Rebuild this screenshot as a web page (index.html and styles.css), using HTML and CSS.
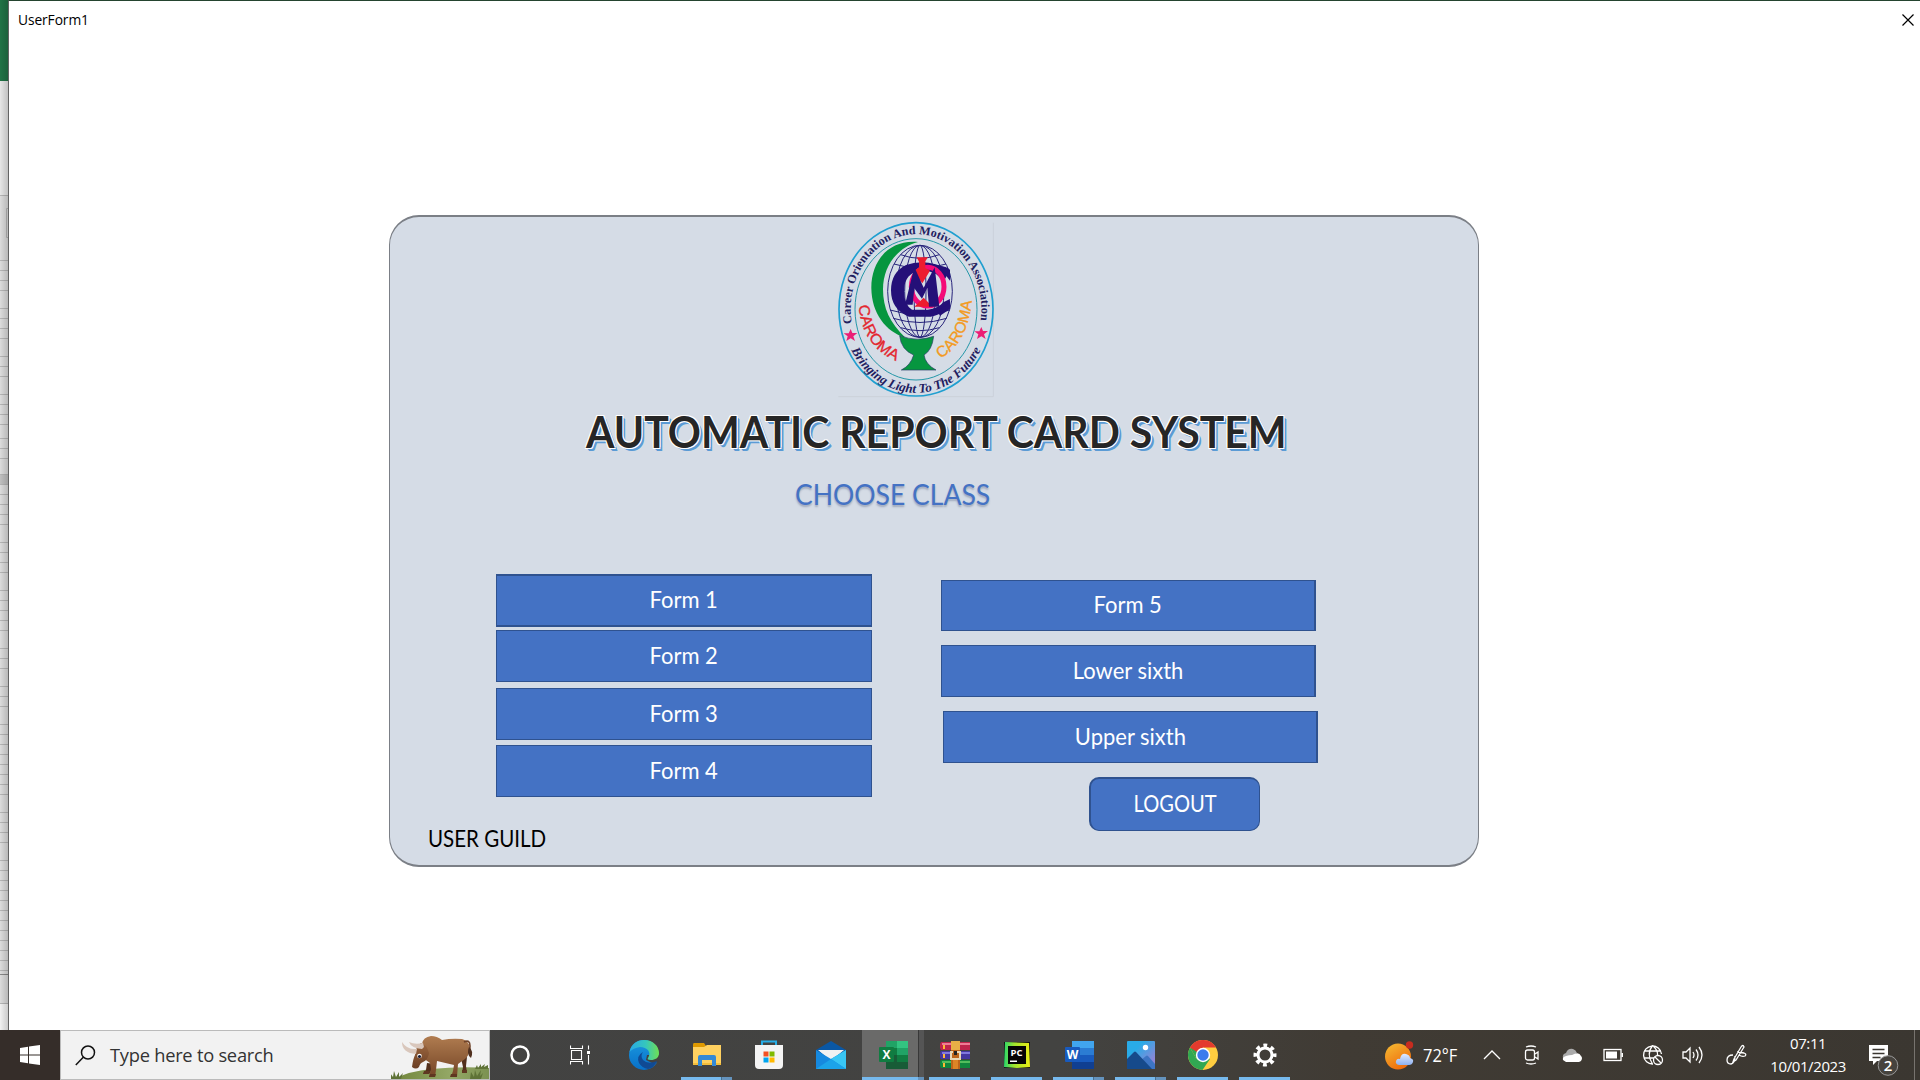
FILE: index.html
```html
<!DOCTYPE html>
<html lang="en">
<head>
<meta charset="utf-8">
<title>UserForm1</title>
<link rel="stylesheet" href="styles.css">
</head>
<body>
<div class="desktop">
  <div class="workspace">
    <div class="sheet-edge">
      <svg width="8" height="1030" viewBox="0 0 8 1030">
        <defs><linearGradient id="edge"><stop offset="0" stop-opacity="0"/><stop offset="1" stop-opacity=".16"/></linearGradient></defs>
        <path fill="#e6e6e6" d="M0 0h8v1030H0z"/>
        <path fill="#217346" d="M0 0h8v81H0z"/>
        <path fill="#dcdcdc" d="M0 195h8v808H0z"/>
        <path fill="#c0c0c0" d="M0 474h8v11H0z"/>
        <path fill="#f1f1f1" d="M0 1004h8v26H0z"/>
        <path stroke="#b5b5b5" fill="none" d="M0 195.500h8M8 208.500H6.500v29H8M0 260.500h8M0 270.500h8M0 280.500h8M0 290.500h8M0 308.500h8M0 318.500h8M0 328.500h8M0 338.500h8M0 356.500h8M0 366.500h8M0 376.500h8M0 394.500h8M0 404.500h8M0 414.500h8M0 424.500h8M0 438.500h8M0 448.500h8M0 458.500h8M0 474.500h8M0 484.500h8M0 494.500h8M0 504.500h8M0 514.500h8M0 524.500h8M0 542.500h8M0 552.500h8M0 562.500h8M0 572.500h8M0 590.500h8M0 600.500h8M0 610.500h8M0 620.500h8M0 630.500h8M0 648.500h8M0 658.500h8M0 668.500h8M0 686.500h8M0 696.500h8M0 706.500h8M0 724.500h8M0 734.500h8M0 744.500h8M0 754.500h8M0 764.500h8M0 774.500h8M0 784.500h8M0 794.500h8M0 812.500h8M0 822.500h8M0 832.500h8M0 842.500h8M0 860.500h8M0 870.500h8M0 880.500h8M0 890.500h8M0 900.500h8M0 910.500h8M0 920.500h8M0 930.500h8M0 940.500h8M0 950.500h8M0 960.500h8M0 970.500h8M0 1003.500h8"/>
        <path stroke="#888" d="M0 974.500h8"/>
        <path fill="url(#edge)" d="M0 0h8v1030H0z"/>
      </svg>
    </div>
    <main class="window">
      <header class="titlebar">
        <span>UserForm1</span>
        <svg class="close" width="12" height="12" viewBox="0 0 12 12"><path d="M.5.5l11 11M11.500.5l-11 11" stroke="#000" stroke-width="1.200"/></svg>
      </header>
      <section class="card">
        <svg class="logo" width="190" height="195" viewBox="0 0 570 585">
          <path d="M520 38v522H55" fill="none" stroke="#cbd1da" stroke-width="3"/>
          <defs>
            <path id="ring-top" d="M95.500 340A196 225 0 1 1 480.500 340"/>
            <path id="ring-bottom" d="M94 420A222 250 0 0 0 482 420"/>
            <path id="left-word" d="M116 286Q126 412 236 456"/>
            <path id="right-word" d="M362 446Q446 395 456 268"/>
          </defs>
          <ellipse cx="288" cy="298" rx="231" ry="260" fill="none" stroke="#1f9fd0" stroke-width="5"/>
          <ellipse cx="288" cy="298" rx="183" ry="212" fill="none" stroke="#2497a8" stroke-width="3"/>
          <g fill="none" stroke="#27247b" stroke-width="3">
            <ellipse cx="300" cy="244" rx="97" ry="138"/>
            <ellipse cx="300" cy="244" rx="72" ry="138"/>
            <ellipse cx="300" cy="244" rx="46" ry="138"/>
            <ellipse cx="300" cy="244" rx="18" ry="138"/>
            <path d="M242 134q58 22 116 0M222 162q78 25 156 0M210 300q90 28 180 0M220 325q80 25 160 0M242 353q58 18 116 0"/>
          </g>
          <path fill="#06963f" d="M294 96C205 88 153 155 154 235c1 75 43 130 103 149-48-45-68-90-68-146 0-67 40-124 105-142z"/>
          <path fill="#06963f" stroke="#263d66" stroke-width="2" d="M239 377q54 20 102 2-5 42-29 56 4 28 36 45H244q28-14 37-45-38-16-42-58z"/>
          <path fill="#241078" d="M390 180Q320 143 258 165q-45 22-45 76 0 58 54 79h65q50-9 58-53l-20 10q-16 19-47 22h-47q-22-13-24-54 0-47 35-60 56-13 83 31z"/>
          <ellipse cx="323" cy="230" rx="49" ry="58" fill="none" stroke="#f40b78" stroke-width="15"/>
          <path fill="#ed1c2e" d="M290 142h34l-8 12v20l14 8-23 38-27-37 17-10v-18zM283 290l28-27 27 27z"/>
          <path fill="#241078" d="M283 171l28 62 33-61 14 118h-31l-5-57-16 33-23-31-5 49h-23z"/>
          <path fill="#241078" d="M352 168q30 0 38 12v32l-22-28zM350 300q32-8 40-33v30l-30 20z"/>
          <path fill="#eb1e75" d="M92 357l5 12h15l-12 10 5 14-13-8-13 8 4-14-12-9h15zM484 351l5 12h15l-12 10 5 14-13-8-13 8 4-14-12-9h15z"/>
          <g class="logo-text">
            <text font-size="36" fill="#22205f"><textPath href="#ring-top" textLength="738" lengthAdjust="spacingAndGlyphs">Career Orientation And Motivation Association</textPath></text>
            <text font-size="38" font-style="italic" fill="#22205f"><textPath href="#ring-bottom" textLength="492" lengthAdjust="spacingAndGlyphs">Bringing Light To The Future</textPath></text>
          </g>
          <g class="logo-word">
            <text fill="#e3272f" stroke="#e3272f"><textPath href="#left-word" textLength="212" lengthAdjust="spacingAndGlyphs">CAROMA</textPath></text>
            <text fill="#f39a21" stroke="#f39a21"><textPath href="#right-word" textLength="205" lengthAdjust="spacingAndGlyphs">CAROMA</textPath></text>
          </g>
        </svg>
        <h1><span>AUTOMATIC REPORT CARD SYSTEM</span></h1>
        <h2><span>CHOOSE CLASS</span></h2>
        <div class="classes">
          <div class="column column-left">
            <button class="form-first"><span>Form 1</span></button>
            <button><span>Form 2</span></button>
            <button class="form-third"><span>Form 3</span></button>
            <button class="form-fourth"><span>Form 4</span></button>
          </div>
          <div class="column column-right">
            <button class="form-five"><span>Form 5</span></button>
            <button><span>Lower sixth</span></button>
            <button class="upper"><span>Upper sixth</span></button>
            <button class="logout"><span>LOGOUT</span></button>
          </div>
        </div>
        <footer class="guide"><span>USER GUILD</span></footer>
      </section>
    </main>
  </div>

  <nav class="taskbar">
    <div class="start">
      <svg width="20" height="20" viewBox="0 0 20 20"><path fill="#fff" d="M0 3l8-1.200v7.700H0zM9 1.600L20 0v9.500H9zM0 10.500h8v7.700L0 17zM9 10.500h11V20L9 18.400z"/></svg>
    </div>
    <div class="search">
      <svg width="21" height="21" viewBox="0 0 21 21"><circle cx="13" cy="7.500" r="6.500" fill="none" stroke="#111" stroke-width="1.500"/><path d="M8.500 12L.8 20" stroke="#111" stroke-width="1.500"/></svg>
      <span>Type here to search</span>
      <svg class="bull" width="98" height="48" viewBox="0 0 98 48">
        <defs>
          <linearGradient id="hide" x2="0" y2="1"><stop stop-color="#b07c50"/><stop offset="1" stop-color="#744526"/></linearGradient>
          <linearGradient id="head" x2="0" y2="1"><stop stop-color="#9c673f"/><stop offset="1" stop-color="#6b3e24"/></linearGradient>
          <linearGradient id="hill" x2="1"><stop stop-color="#71853b"/><stop offset=".6" stop-color="#94a866"/><stop offset="1" stop-color="#7b9151"/></linearGradient>
        </defs>
        <path fill="url(#hill)" d="M3 48q16-8 37-10 30-3 58-1v11z"/>
        <path fill="#5f7337" d="M0 48l-1-6 3 4 1-6 2 6 3-5v5l4-4-2 6zM79 48l1-7 3 5 1-7 2 6 4-6-1 6 3-3-2 6zM84 38l2-4 1 3 3-4v3l4-3-1 3 4-2v4z"/>
        <path fill="#53301d" d="M70 27l6-1-1 9 1 7h-5l1-6zM36 32l8 1-4 7-2 3h-6l3-4z"/>
        <path fill="url(#hide)" d="M31 13q1-7 9-8 6 0 11 4 10-2 20-1 7 2 8 9-1 8-5 11l-7 5-1 13h-6l2-6 1-6-17-4-1 9-1 7h-6l2-8-1-6-7-5-7-9z"/>
        <path fill="#5f3721" d="M39 43h6l-1 3h-6zM60 43h6v3h-7zM33 40h6l-1 3h-6zM71 39h5v3h-5z"/>
        <path fill="url(#head)" d="M30 12q6 2 8 10-1 7-6 9-3 1-4 5-3 3-7 0 1-8 3-12 1-8 6-12z"/>
        <path fill="none" stroke="#70442b" stroke-width="1.600" d="M73 11q6-3 6 4 0 5-1 7"/>
        <path fill="#50301f" d="M78 16q5 4 2 11-5-4-2-11z"/>
        <path fill="#d9c7bc" d="M31 18q-11-1-13-7 6 3 14 1l1 4zM25 23Q11 22 11 11q5 8 15 7z"/>
        <circle cx="28.500" cy="25" r="2.300" fill="#fff"/><circle cx="28.500" cy="25.500" r="1.600" fill="#1a1a30"/>
      </svg>
    </div>
    <div class="apps">
      <div class="app app-narrow"><svg width="22" height="22" viewBox="0 0 22 22"><circle cx="11" cy="11" r="8.500" fill="none" stroke="#fff" stroke-width="2.500"/></svg></div>
      <div class="app app-narrow"><svg width="20" height="20" viewBox="0 0 20 20"><path fill="none" stroke="#fff" stroke-width="1.100" d="M.5.5v3h12v-3M.5 19.500v-3h12v3M1.500 5.500h10v9h-10zM18.500.5v4M18.500 10v9.500"/><path fill="#fff" d="M17 6h3v3h-3z"/></svg></div>
      <div class="app app-edge"><svg width="30" height="30" viewBox="0 0 30 30">
        <defs><linearGradient id="edgetop"><stop stop-color="#29a9e5"/><stop offset=".55" stop-color="#35c6bd"/><stop offset="1" stop-color="#70df52"/></linearGradient><linearGradient id="edgeleft" x2="0" y2="1"><stop stop-color="#1b98df"/><stop offset="1" stop-color="#0870c8"/></linearGradient></defs>
        <circle cx="15" cy="15" r="15" fill="url(#edgeleft)"/>
        <path fill="#424240" d="M18 15h12.500v6L25 24l-8-4z"/>
        <path fill="url(#edgetop)" d="M.5 12C2 4 8 0 15 0c9 0 15 6 15 13 0 5-4 7-8 7-3 0-4-1-3-2 4-6-1-11-8-11Q4 8 .5 12z"/>
        <path fill="#104a94" d="M14 12q-7 4-4 11 3 5 9 6 6-1 9-8-9 4-14-1-3-4 0-8z"/>
      </svg></div>
      <div class="app open grouped"><svg width="28" height="24" viewBox="0 0 28 24"><path fill="#df9900" d="M0 1.500Q0 0 1 0h10l2 3v8H0z"/><path fill="#ffd160" d="M0 4h11l3-2h14v20H0z"/><path fill="#f3bd3b" d="M0 20h28v2H0z"/><path fill="#3489d5" d="M5 23V14q0-2 2-2h14q2 0 2 2v9h-4v-6H9v6z"/></svg></div>
      <div class="app"><svg width="30" height="30" viewBox="0 0 30 30"><path fill="none" stroke="#26aee8" stroke-width="2" d="M8 7V1.500h14V7"/><path fill="#f4f4f4" d="M1 5h28v20q0 4-4 4H5q-4 0-4-4z"/><path fill="#f25022" d="M9.500 11.500h5v5h-5z"/><path fill="#7fba00" d="M15.500 11.500h5v5h-5z"/><path fill="#00a4ef" d="M9.500 17.500h5v5h-5z"/><path fill="#ffb900" d="M15.500 17.500h5v5h-5z"/></svg></div>
      <div class="app"><svg width="30" height="28" viewBox="0 0 30 28"><path fill="#0a57a4" d="M0 9L15 0l15 9v8H0z"/><path fill="#f2f2f2" d="M2 9h26L15 20z"/><path fill="#1689df" d="M0 9l15 9 15-9v19H0z"/><path fill="#39c6f4" d="M30 9v19L15 18z"/><path fill="#1ca3e9" d="M0 28l15-10 15 10z"/></svg></div>
      <div class="app open active"><svg width="29" height="28" viewBox="0 0 29 28"><path fill="#21a366" d="M7 0h22v28H7z"/><path fill="#33c481" d="M18 0h11v7H18z"/><path fill="#107c41" d="M7 7h11v7H7zM18 14h11v7H18z"/><path fill="#185c37" d="M7 14h11v7h11v7H7z"/><rect y="6" width="15" height="15" rx="1" fill="#107c41"/><text x="7.500" y="18" class="glyph">X</text></svg></div>
      <div class="app open"><svg width="30" height="28" viewBox="0 0 30 28"><path fill="#bf244c" d="M1 1h29v8H1l-1-2V3z"/><path fill="#4436a0" d="M1 10h29v8H1l-1-2v-4z"/><path fill="#11863d" d="M1 19h29v8H1l-1-2v-4z"/><path fill="#ed7b94" d="M2 2h28v2H2z"/><path fill="#8177dc" d="M2 11h28v2H2z"/><path fill="#53bd5c" d="M2 20h28v2H2z"/><path fill="#ffb735" d="M3 4h2v4H3zM3 13h2v4H3zM3 22h2v4H3z"/><path fill="#bd651b" d="M11 0h9v28h-9z"/><path fill="#e8af46" d="M11 0h9v9h-9z"/><path fill="#dc8526" d="M13 18h5v10h-5z"/><path fill="none" stroke="#ead7b5" stroke-width="2" d="M13 11h-2v7h9v-7h-3"/><path fill="#222" d="M14 10h3v4h-3z"/></svg></div>
      <div class="app open"><svg width="28" height="28" viewBox="0 0 28 28"><defs><linearGradient id="pc"><stop stop-color="#28d66b"/><stop offset=".4" stop-color="#a2e52d"/><stop offset="1" stop-color="#e9ed16"/></linearGradient></defs><path fill="#101010" d="M1 1h26v26H1z"/><path fill="url(#pc)" d="M2 1l24 1 1 24-13 1-13-1z"/><path fill="#050505" d="M5 5h18v18H5z"/><text x="13.500" y="14.500" class="glyph pc">PC</text><path fill="#fff" d="M7 19.500h7V21H7z"/></svg></div>
      <div class="app open grouped"><svg width="29" height="28" viewBox="0 0 29 28"><path fill="#41a5ee" d="M7 0h22v7H7z"/><path fill="#2b7cd3" d="M7 7h22v7H7z"/><path fill="#185abd" d="M7 14h22v7H7z"/><path fill="#103f91" d="M7 21h22v7H7z"/><rect y="6" width="15" height="15" rx="1" fill="#185abd"/><text x="7.500" y="18" class="glyph">W</text></svg></div>
      <div class="app open grouped"><svg width="28" height="28" viewBox="0 0 28 28"><defs><linearGradient id="sky" x2="1" y2="1"><stop offset=".3" stop-color="#29abe8"/><stop offset=".8" stop-color="#8c86d6"/></linearGradient></defs><rect width="28" height="28" rx="1" fill="url(#sky)"/><path fill="#3d75c4" d="M13 20l6-5q1-1 2 0l7 8v5H15z"/><path fill="#164a8b" d="M0 18l7-7q1-1 2 0l16 17H0z"/><circle cx="18.500" cy="6.500" r="2.700" fill="#fff"/></svg></div>
      <div class="app open"><svg width="30" height="30" viewBox="0 0 30 30"><circle cx="15" cy="15" r="15" fill="#ffcd40"/><path fill="#31a852" d="M15 15l7 4-7.500 11A15 15 0 0 1 2 7.500l6.500 11.500z"/><path fill="#e33b2e" d="M15 15H8.500L2 7.500A15 15 0 0 1 28 7.500H15z"/><path fill="#31a852" d="M2 7.500L8.500 19 15 15 9 12z"/><circle cx="15" cy="15" r="7.200" fill="#fff"/><circle cx="15" cy="15" r="5.700" fill="#3b7ced"/></svg></div>
      <div class="app open"><svg width="24" height="24" viewBox="0 0 24 24"><circle cx="12" cy="12" r="7" fill="none" stroke="#fff" stroke-width="3"/><circle cx="12" cy="12" r="9.500" fill="none" stroke="#fff" stroke-width="4" stroke-dasharray="3.730 3.730" stroke-dashoffset="1.860"/></svg></div>
    </div>
    <div class="tray">
      <div class="weather">
        <svg width="29" height="29" viewBox="0 0 29 29"><defs><linearGradient id="sun" x2=".6" y2="1"><stop stop-color="#f5bd34"/><stop offset="1" stop-color="#ef6b0c"/></linearGradient><linearGradient id="cl" x2="0" y2="1"><stop stop-color="#e0eaff"/><stop offset="1" stop-color="#8eb1f0"/></linearGradient></defs><circle cx="13" cy="15.500" r="13" fill="url(#sun)"/><path fill="url(#cl)" d="M14 24q-4-1-3-4 1-3 4-2 1-6 6-5 4 1 4 4 4 1 3 4-1 3-4 3z"/><circle cx="24.500" cy="4" r="3.700" fill="#c72c1f"/></svg>
        <span>72°F</span>
      </div>
      <div class="tray-icon"><svg width="18" height="18"><path d="M1 13l8-8 8 8"/></svg></div>
      <div class="tray-icon"><svg width="18" height="20"><rect x="2.500" y="5" width="9" height="10" rx="2"/><path d="M12 9l3-2v7l-3-2M3 2q5-2 10 0M3 18q5 2 10 0"/></svg></div>
      <div class="tray-icon"><svg width="22" height="18"><path fill="#aaa" stroke="none" d="M2 12Q1 8 5 7q2-5 7-4 3 1 4 4L5 15z"/><path fill="#fff" stroke="none" d="M2 14q-1-3 3-4 3-1 6-1 7-4 9 1 2 2 0 5l-2 1H5z"/></svg></div>
      <div class="tray-icon"><svg width="20" height="14"><rect x="1" y="1.500" width="17" height="11"/><path fill="#fff" stroke="none" d="M3 3.500h11v7H3zM18.500 5H20v4h-1.500z"/></svg></div>
      <div class="tray-icon"><svg width="22" height="22"><path d="M19.500 10A9 9 0 1 0 11 20M2 7h17M2 14h10M10.500 1.500Q4 10 10.500 20M10.500 1.500Q16 6 15.500 11"/><circle cx="16" cy="16" r="4.500"/><path d="M13 13l6 6"/></svg></div>
      <div class="tray-icon"><svg width="22" height="20"><path d="M1 7h3l4-4v14l-4-4H1zM11 7q2 3 0 6M14 4.500q4 5.500 0 11M17 2q6 8 0 16"/></svg></div>
      <div class="tray-icon pen"><svg width="22" height="22"><path d="M7 11q-6 0-6 5 0 4 4 4 4-1 4-8M8 15l7-12q2-3 3 0L10 16l-3 2zM11 8l7 1q3 1 1 3-3 1-6-1"/></svg></div>
      <div class="clock"><span>07:11</span><span>10/01/2023</span></div>
      <div class="notify"><svg width="32" height="32" viewBox="0 0 32 32"><path fill="#fff" d="M1 1h19v16H9l-4 4v-4H1z"/><path stroke="#3b3731" stroke-width="1.300" d="M4.500 5.500h12M4.500 9.500h12M4.500 13.500h8"/><circle cx="20" cy="21.500" r="9.800" fill="#46433e" stroke="#999" stroke-width="1"/><text x="20" y="27" class="count">2</text></svg></div>
      <div class="show-desktop"></div>
    </div>
  </nav>
</div>
</body>
</html>
```

FILE: styles.css
```css
* { box-sizing: border-box; }
body { margin: 0; background: #fff; overflow: hidden; }
svg { display: block; flex: none; }
.desktop { width: 1920px; height: 1080px; display: flex; flex-direction: column; font-family: "Open Sans", sans-serif; }
.workspace { height: 1030px; display: flex; }
.sheet-edge { width: 8px; }
.window { flex: 1; background: #fff; border-left: 1px solid #636363; border-top: 1px solid #24442f; }
.titlebar { height: 37px; padding: 0 6px 0 9px; display: flex; align-items: center; justify-content: space-between; font-family: "Open Sans", sans-serif; font-size: 13.800px; letter-spacing: -.1px; color: #000; }

.card { width: 1090px; height: 652px; margin: 177px 0 0 380px; background: #d5dce6; border: 2px solid #7b7f86; border-width: 2px 1px; border-radius: 30px; display: flex; flex-direction: column; font-family: Lato, sans-serif; }
.logo { margin: -7px 0 0 430px; }
.logo-text { font-family: "Liberation Serif", serif; font-weight: 700; }
.logo-word { font-family: "Liberation Sans", sans-serif; font-size: 46px; }
h1, h2 { margin: 0; font-weight: 400; white-space: nowrap; }
h1 { height: 58px; line-height: 54px; padding-left: 196px; font-size: 43px; font-weight: 700; color: #262626; }
h1 span { display: inline-block; transform-origin: 0 50%; transform: scaleX(.954); text-shadow: -1px -1px #fff, 1px -1px #fff, -1px 1px #fff, 1px 1px #fff, 3px 3px #5b9bd5, 2px 2px #5b9bd5; }
h2 { height: 60px; line-height: 61px; padding-left: 405px; font-size: 29.500px; color: #4472c4; text-shadow: 0 2px 2px rgba(60, 75, 110, .35); }
h2 span, button span, .guide span { display: inline-block; transform: scaleX(.9); }
h2 span, .guide span { transform-origin: 0 50%; }
.guide span { transform: scaleX(.92); }
button:not(.logout) span { transform: scaleX(.985); }
.classes { margin-top: 51px; padding-left: 106px; display: flex; gap: 69px; height: 252px; }
.column { display: flex; flex-direction: column; align-items: flex-start; }
.column-left { width: 376px; }
button { width: 376px; height: 52px; margin: 0; padding: 0; flex: none; background: #4472c4; border: 1px solid #2f528f; color: #fff; font: 400 22.300px/1 Lato, sans-serif; }
.form-first { height: 53px; border-width: 2px 1px; margin-bottom: 3px; }
.form-third { margin: 6px 0 5px; }
.column-right { padding-top: 6px; }
.column-right button { width: 375px; border-right-width: 2px; }
.column-right .form-five { height: 51px; margin-bottom: 14px; }
.column-right .upper { margin: 14px 0 14px 2px; }
.column-right .logout { width: 171px; height: 54px; margin-left: 148px; border-width: 2px 1px 1px 2px; border-radius: 10px; }
.guide { padding: 0 0 0 38px; font-size: 22.300px; line-height: 26px; color: #000; }

.taskbar { height: 50px; display: flex; background: linear-gradient(90deg, #424242 0, #434341 55%, #403b34 70%, #3b3731 100%); color: #fff; }
.start { width: 60px; background: #352d29; display: flex; align-items: center; justify-content: center; }
.search { width: 430px; background: #f2f2f2; border: 1px solid #bbb; display: flex; align-items: center; padding-left: 14px; color: #333; font-size: 18.300px; letter-spacing: -.25px; }
.search span { margin: 0 0 2px 14px; }
.bull { margin-left: auto; }
.apps { display: flex; width: 804px; }
.app { width: 62px; flex: none; display: flex; align-items: center; justify-content: center; position: relative; }
.app-narrow { width: 60px; }
.app-edge { width: 66px; padding-left: 1px; }
.open::after { content: ""; position: absolute; left: 5px; right: 6px; bottom: 0; height: 3px; background: #76b9ed; }
.grouped::after { background: linear-gradient(90deg, #76b9ed 40px, #48708f 40px, #48708f 41px, #6493bd 41px); }
.active { background: linear-gradient(90deg, #6a6a69 56px, #383838 56px, #383838 57px, #555 57px); }
.active::after { left: 0; right: 0; background: linear-gradient(90deg, #76b9ed 56px, #6493bd 56px); }
.glyph { fill: #fff; font: 700 12px "Open Sans", sans-serif; text-anchor: middle; }
.pc { font-size: 9.500px; }
.tray { flex: 1; display: flex; align-items: stretch; }
.weather { width: 178px; padding-left: 91px; display: flex; align-items: center; gap: 9px; font-size: 17.500px; }
.weather span { transform: scaleX(.94); transform-origin: 0 50%; }
.tray-icon { width: 40.200px; display: flex; align-items: center; justify-content: center; }
.tray-icon svg { fill: none; stroke: #fff; stroke-width: 1.300; }
.pen { width: 48px; }
.clock { width: 94px; padding-bottom: 1px; display: flex; flex-direction: column; align-items: center; justify-content: center; font-size: 15px; line-height: 23px; letter-spacing: -.4px; }
.notify { flex: 1; display: flex; align-items: center; padding: 9px 0 0 13px; }
.count { fill: #fff; font: 600 15px "Open Sans", sans-serif; text-anchor: middle; }
.show-desktop { width: 6px; border-left: 1px solid #77736e; }
```
